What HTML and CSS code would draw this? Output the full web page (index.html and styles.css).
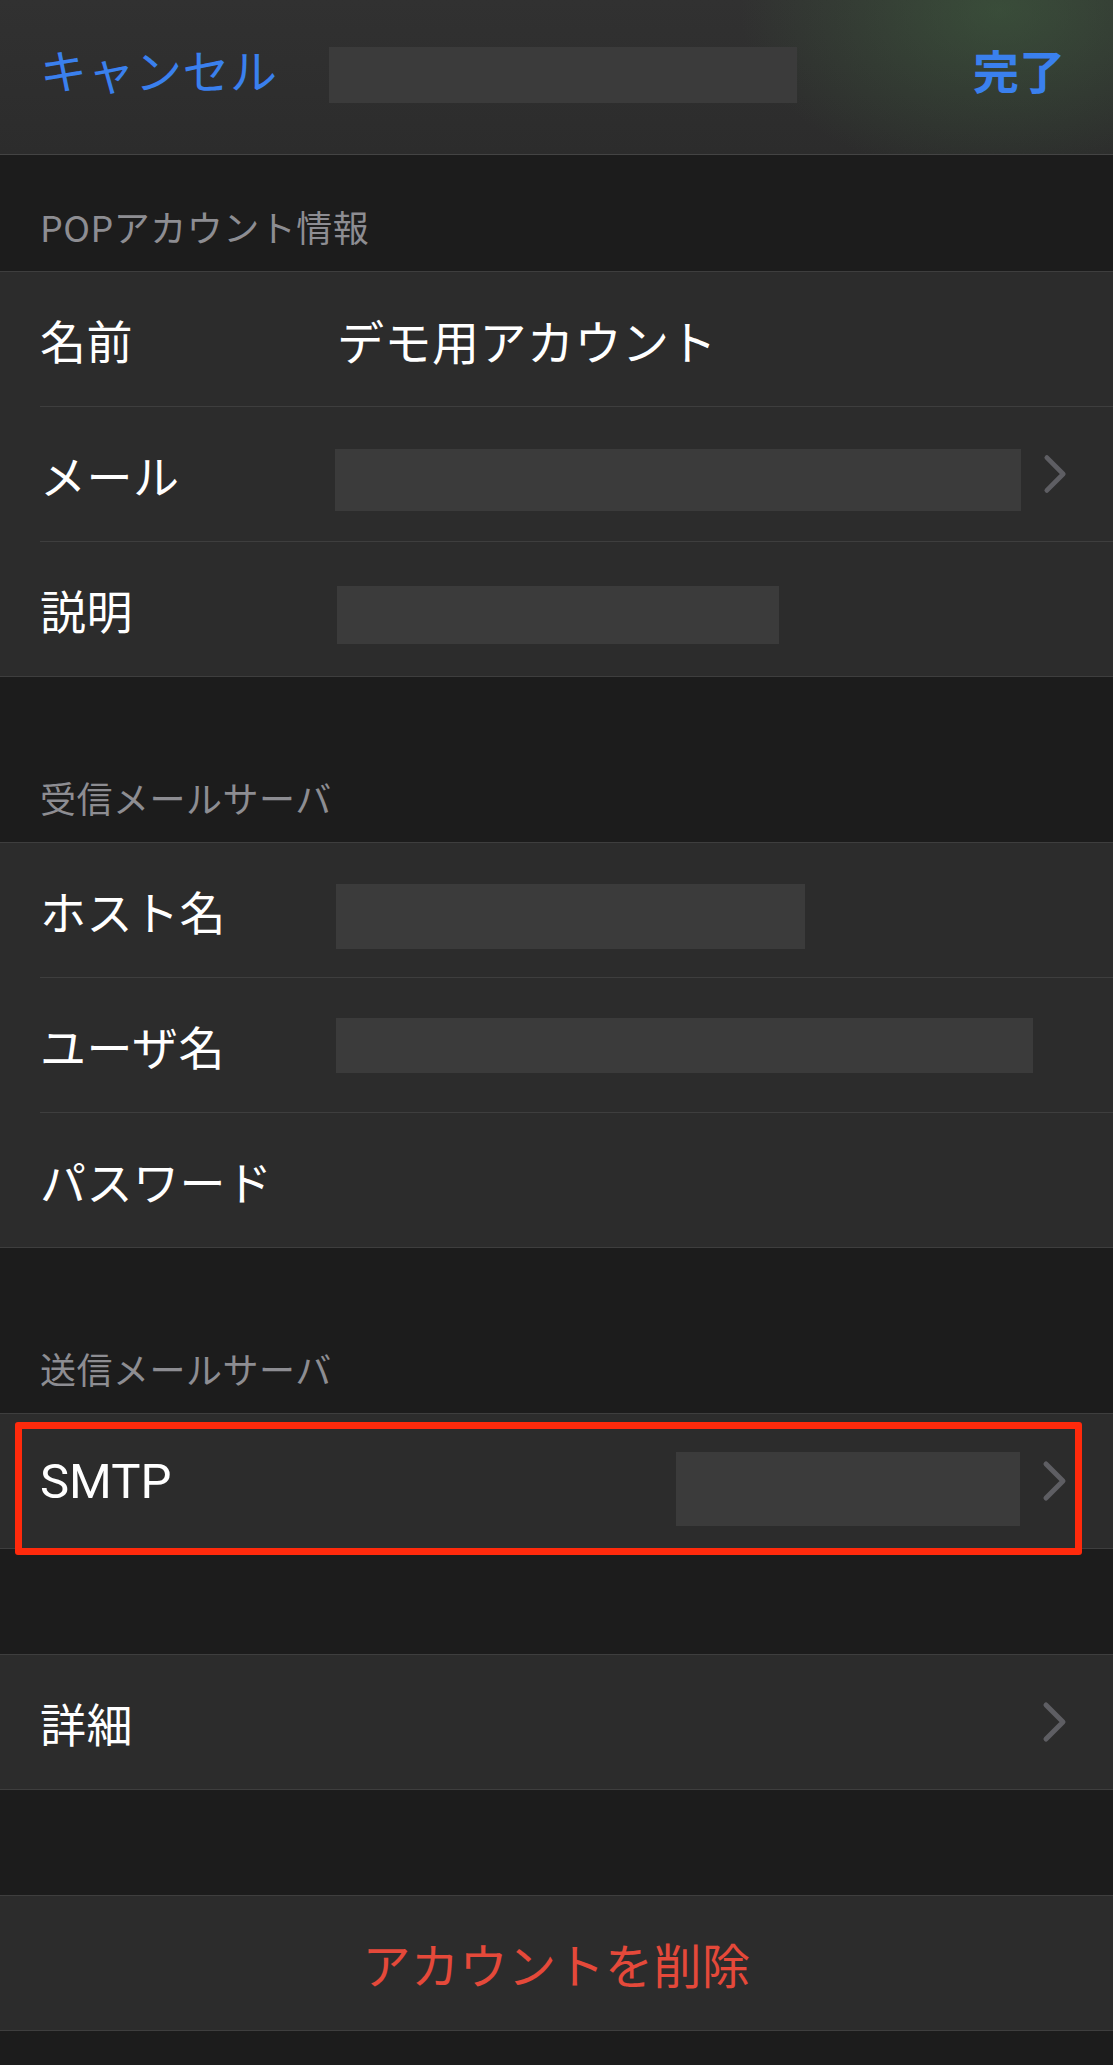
FILE: index.html
```html
<!DOCTYPE html>
<html lang="ja">
<head>
  <meta charset="UTF-8" />
  <title>POPアカウント情報</title>
  <meta name="viewport" content="width=device-width, initial-scale=1.0" />
  <link rel="stylesheet" href="styles.css">
</head>
<body>

  <!-- Nav bar -->
  <header class="navbar">
    <span class="nav-cancel">キャンセル</span>
    <span class="nav-title-mask"></span>
    <span class="nav-done">完了</span>
  </header>

  <main>
    <div class="section-title first">POPアカウント情報</div>
    <div class="group">
      <div class="row">
        <span class="label">名前</span>
        <span class="value">デモ用アカウント</span>
      </div>
      <div class="row">
        <span class="label">メール</span>
        <span class="mask mask-mail"></span>
        <svg class="chevron" viewBox="0 0 26 42"><polyline points="4,4 21,21 4,38" /></svg>
      </div>
      <div class="row">
        <span class="label">説明</span>
        <span class="mask mask-desc"></span>
      </div>
    </div>

    <div class="section-title">受信メールサーバ</div>
    <div class="group">
      <div class="row">
        <span class="label">ホスト名</span>
        <span class="mask mask-host"></span>
      </div>
      <div class="row">
        <span class="label">ユーザ名</span>
        <span class="mask mask-user"></span>
      </div>
      <div class="row">
        <span class="label">パスワード</span>
      </div>
    </div>

    <div class="section-title">送信メールサーバ</div>
    <div class="group">
      <div class="row">
        <span class="label latin">SMTP</span>
        <span class="mask mask-smtp"></span>
        <svg class="chevron" viewBox="0 0 26 42"><polyline points="4,4 21,21 4,38" /></svg>
      </div>
      <!-- annotation frame -->
      <div class="highlight"></div>
    </div>

    <div class="spacer"></div>
    <div class="group">
      <div class="row">
        <span class="label">詳細</span>
        <svg class="chevron" viewBox="0 0 26 42"><polyline points="4,4 21,21 4,38" /></svg>
      </div>
    </div>

    <div class="spacer"></div>
    <div class="group">
      <div class="row center">
        <span class="danger">アカウントを削除</span>
      </div>
    </div>
  </main>

</body>
</html>
```

FILE: styles.css
```css
body {
  margin: 0;
  background-color: #1c1c1c;
  font-family: "Noto Sans CJK JP", "Noto Sans", sans-serif;
  color: #ffffff;
}

.navbar {
  height: 154px;
  border-bottom: 1px solid #444444;
  display: flex;
  align-items: flex-start;
  padding: 0 48px 0 40px;
  background:
    radial-gradient(ellipse 260px 170px at 1000px 10px, rgba(66, 104, 66, 0.5), rgba(66, 104, 66, 0) 100%),
    linear-gradient(180deg, #313131, #2c2c2c);
}

.nav-cancel {
  width: 289px;
  flex-shrink: 0;
  font-size: 47px;
  line-height: 1;
  color: #3a80ee;
  margin-top: 45px;
  letter-spacing: 0.5px;
}

.nav-title-mask {
  width: 468px;
  height: 56px;
  margin-top: 47px;
  background-color: #3b3b3b;
}

.nav-done {
  margin-left: auto;
  font-size: 46px;
  line-height: 1;
  font-weight: bold;
  color: #3a80ee;
  margin-top: 46px;
}

.section-title {
  height: 165px;
  box-sizing: border-box;
  display: flex;
  align-items: flex-end;
  padding: 0 0 24px 40px;
  font-size: 36px;
  line-height: 42px;
  letter-spacing: 0.5px;
  color: #8d8d92;
}

.section-title.first {
  height: 116px;
}

.group {
  position: relative;
  background-color: #2c2c2c;
  border-top: 1px solid #3e3e3e;
  border-bottom: 1px solid #3e3e3e;
}

.row {
  height: 134px;
  margin-left: 40px;
  display: flex;
  align-items: center;
}

.row + .row {
  border-top: 1px solid #3e3e3e;
}

.row.center {
  margin-left: 0;
  justify-content: center;
}

.label {
  width: 297px;
  flex-shrink: 0;
  font-size: 46px;
  line-height: 1;
  letter-spacing: 0.5px;
}

.label.latin {
  font-family: "Roboto", "Noto Sans", sans-serif;
  font-size: 49px;
  letter-spacing: 0;
}

.value {
  font-size: 47px;
  line-height: 1;
  letter-spacing: 0.5px;
}

.mask {
  background-color: #3b3b3b;
  flex-shrink: 0;
}

.mask-mail {
  width: 686px;
  height: 62px;
  margin-top: 12px;
  margin-left: -2px;
}

.mask-desc {
  width: 442px;
  height: 58px;
  margin-top: 12px;
}

.mask-host {
  width: 469px;
  height: 65px;
  margin-top: 12px;
  margin-left: -1px;
}

.mask-user {
  width: 697px;
  height: 55px;
  margin-left: -1px;
}

.mask-smtp {
  width: 344px;
  height: 74px;
  margin-top: 16px;
  margin-left: auto;
}

.chevron {
  width: 26px;
  height: 42px;
  margin-left: auto;
  margin-right: 45px;
  fill: none;
  stroke: #5e5e63;
  stroke-width: 5;
  stroke-linecap: round;
  stroke-linejoin: round;
}

.mask + .chevron {
  margin-left: 22px;
}

.danger {
  font-size: 48px;
  line-height: 1;
  color: #e5493a;
  letter-spacing: 0.5px;
}

.spacer {
  height: 105px;
}

.highlight {
  position: absolute;
  top: 8px;
  left: 15px;
  width: 1067px;
  height: 133px;
  box-sizing: border-box;
  border: 7px solid #ff2a0c;
  border-radius: 3px;
}
```
